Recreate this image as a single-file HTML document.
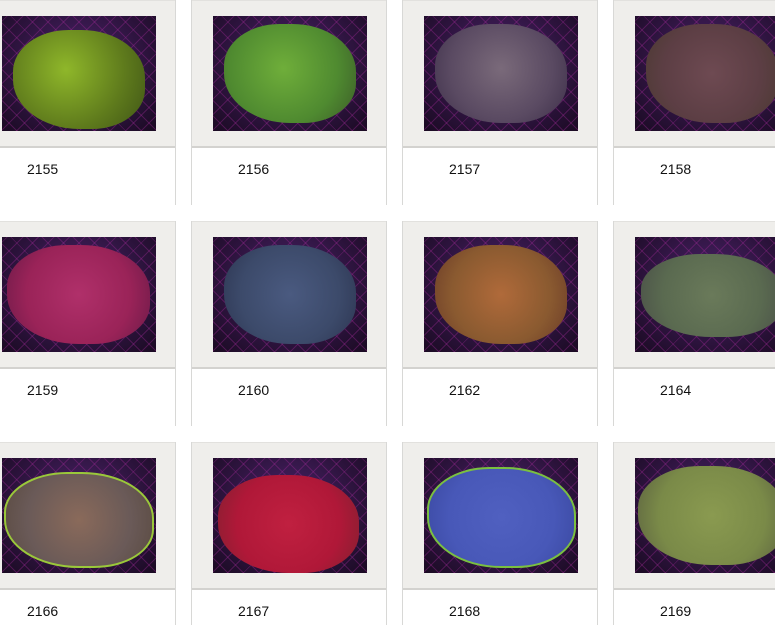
<!DOCTYPE html>
<html><head><meta charset="utf-8"><style>
html,body{margin:0;padding:0;background:#fff;width:775px;height:625px;overflow:hidden;position:relative;font-family:"Liberation Sans",sans-serif}
.card{position:absolute;width:196px;height:205px;border-left:1px solid #d8d8d6;border-right:1px solid #d8d8d6;background:#fff;box-sizing:border-box}
.frame{position:absolute;left:0;top:0;right:0;height:148px;background:#efeeeb;border-bottom:2px solid #d3d2cf;border-top:1px solid #e2e1de;box-sizing:border-box}
.img{position:absolute;left:21px;top:15px;width:154px;height:115px;overflow:hidden;
background:
repeating-linear-gradient(45deg,transparent 0 10px,rgba(160,40,150,.35) 10px 11px),
repeating-linear-gradient(-45deg,transparent 0 10px,rgba(160,40,150,.35) 10px 11px),
radial-gradient(ellipse at 50% 40%,#4a2268,#1a0a22)}
.blob{position:absolute;left:7%;top:7%;width:86%;height:86%;border-radius:42% 48% 40% 50%}
.lbl{position:absolute;left:46px;top:161px;font-size:14px;color:#111}
</style></head><body>
<div class="card" style="left:-20px;top:0"><div class="frame"><div class="img"><div class="blob" style="background:radial-gradient(circle at 40% 40%,#8fb72a,#5e7a1c 60%,#3f5416);top:12%"></div></div></div><div class="lbl">2155</div></div>
<div class="card" style="left:191px;top:0"><div class="frame"><div class="img"><div class="blob" style="background:radial-gradient(circle at 45% 45%,#6fae3a,#4f8a30 60%,#3b5a28)"></div></div></div><div class="lbl">2156</div></div>
<div class="card" style="left:402px;top:0"><div class="frame"><div class="img"><div class="blob" style="background:radial-gradient(circle at 50% 45%,#7a6a7a,#5a4a62 60%,#3c2e48)"></div></div></div><div class="lbl">2157</div></div>
<div class="card" style="left:613px;top:0"><div class="frame"><div class="img"><div class="blob" style="background:radial-gradient(circle at 50% 50%,#6e4a52,#5c3e44 60%,#4a3a30)"></div></div></div><div class="lbl">2158</div></div>

<div class="card" style="left:-20px;top:221px"><div class="frame"><div class="img"><div class="blob" style="background:radial-gradient(circle at 50% 50%,#b0306a,#9a2358 60%,#6a1a48);left:3%;width:93%"></div></div></div><div class="lbl">2159</div></div>
<div class="card" style="left:191px;top:221px"><div class="frame"><div class="img"><div class="blob" style="background:radial-gradient(circle at 50% 50%,#4a5a80,#3c4a6a 60%,#2c3450)"></div></div></div><div class="lbl">2160</div></div>
<div class="card" style="left:402px;top:221px"><div class="frame"><div class="img"><div class="blob" style="background:radial-gradient(circle at 50% 50%,#b06a3a,#8a5a30 60%,#6a3a28)"></div></div></div><div class="lbl">2162</div></div>
<div class="card" style="left:613px;top:221px"><div class="frame"><div class="img"><div class="blob" style="background:radial-gradient(circle at 50% 50%,#6a7a5a,#5a6a50 60%,#4a5048);left:4%;width:92%;top:15%;height:72%"></div></div></div><div class="lbl">2164</div></div>

<div class="card" style="left:-20px;top:442px"><div class="frame"><div class="img"><div class="blob" style="background:radial-gradient(circle at 50% 50%,#8a6a5a,#6a5a58 60%,#5a4a40);border:2px solid #9ac83a;left:1%;width:95%;top:12%;height:80%"></div></div></div><div class="lbl">2166</div></div>
<div class="card" style="left:191px;top:442px"><div class="frame"><div class="img"><div class="blob" style="background:radial-gradient(circle at 50% 50%,#c02040,#b01838 60%,#802030);top:15%;height:85%;left:3%;width:92%"></div></div></div><div class="lbl">2167</div></div>
<div class="card" style="left:402px;top:442px"><div class="frame"><div class="img"><div class="blob" style="background:radial-gradient(circle at 50% 50%,#5060c0,#4858b8 60%,#3a48a0);border:2px solid #7ac040;left:2%;width:94%;top:8%;height:84%"></div></div></div><div class="lbl">2168</div></div>
<div class="card" style="left:613px;top:442px"><div class="frame"><div class="img"><div class="blob" style="background:radial-gradient(circle at 50% 50%,#8a9a50,#7a8a48 60%,#5a6040);left:2%;width:96%"></div></div></div><div class="lbl">2169</div></div>
</body></html>
